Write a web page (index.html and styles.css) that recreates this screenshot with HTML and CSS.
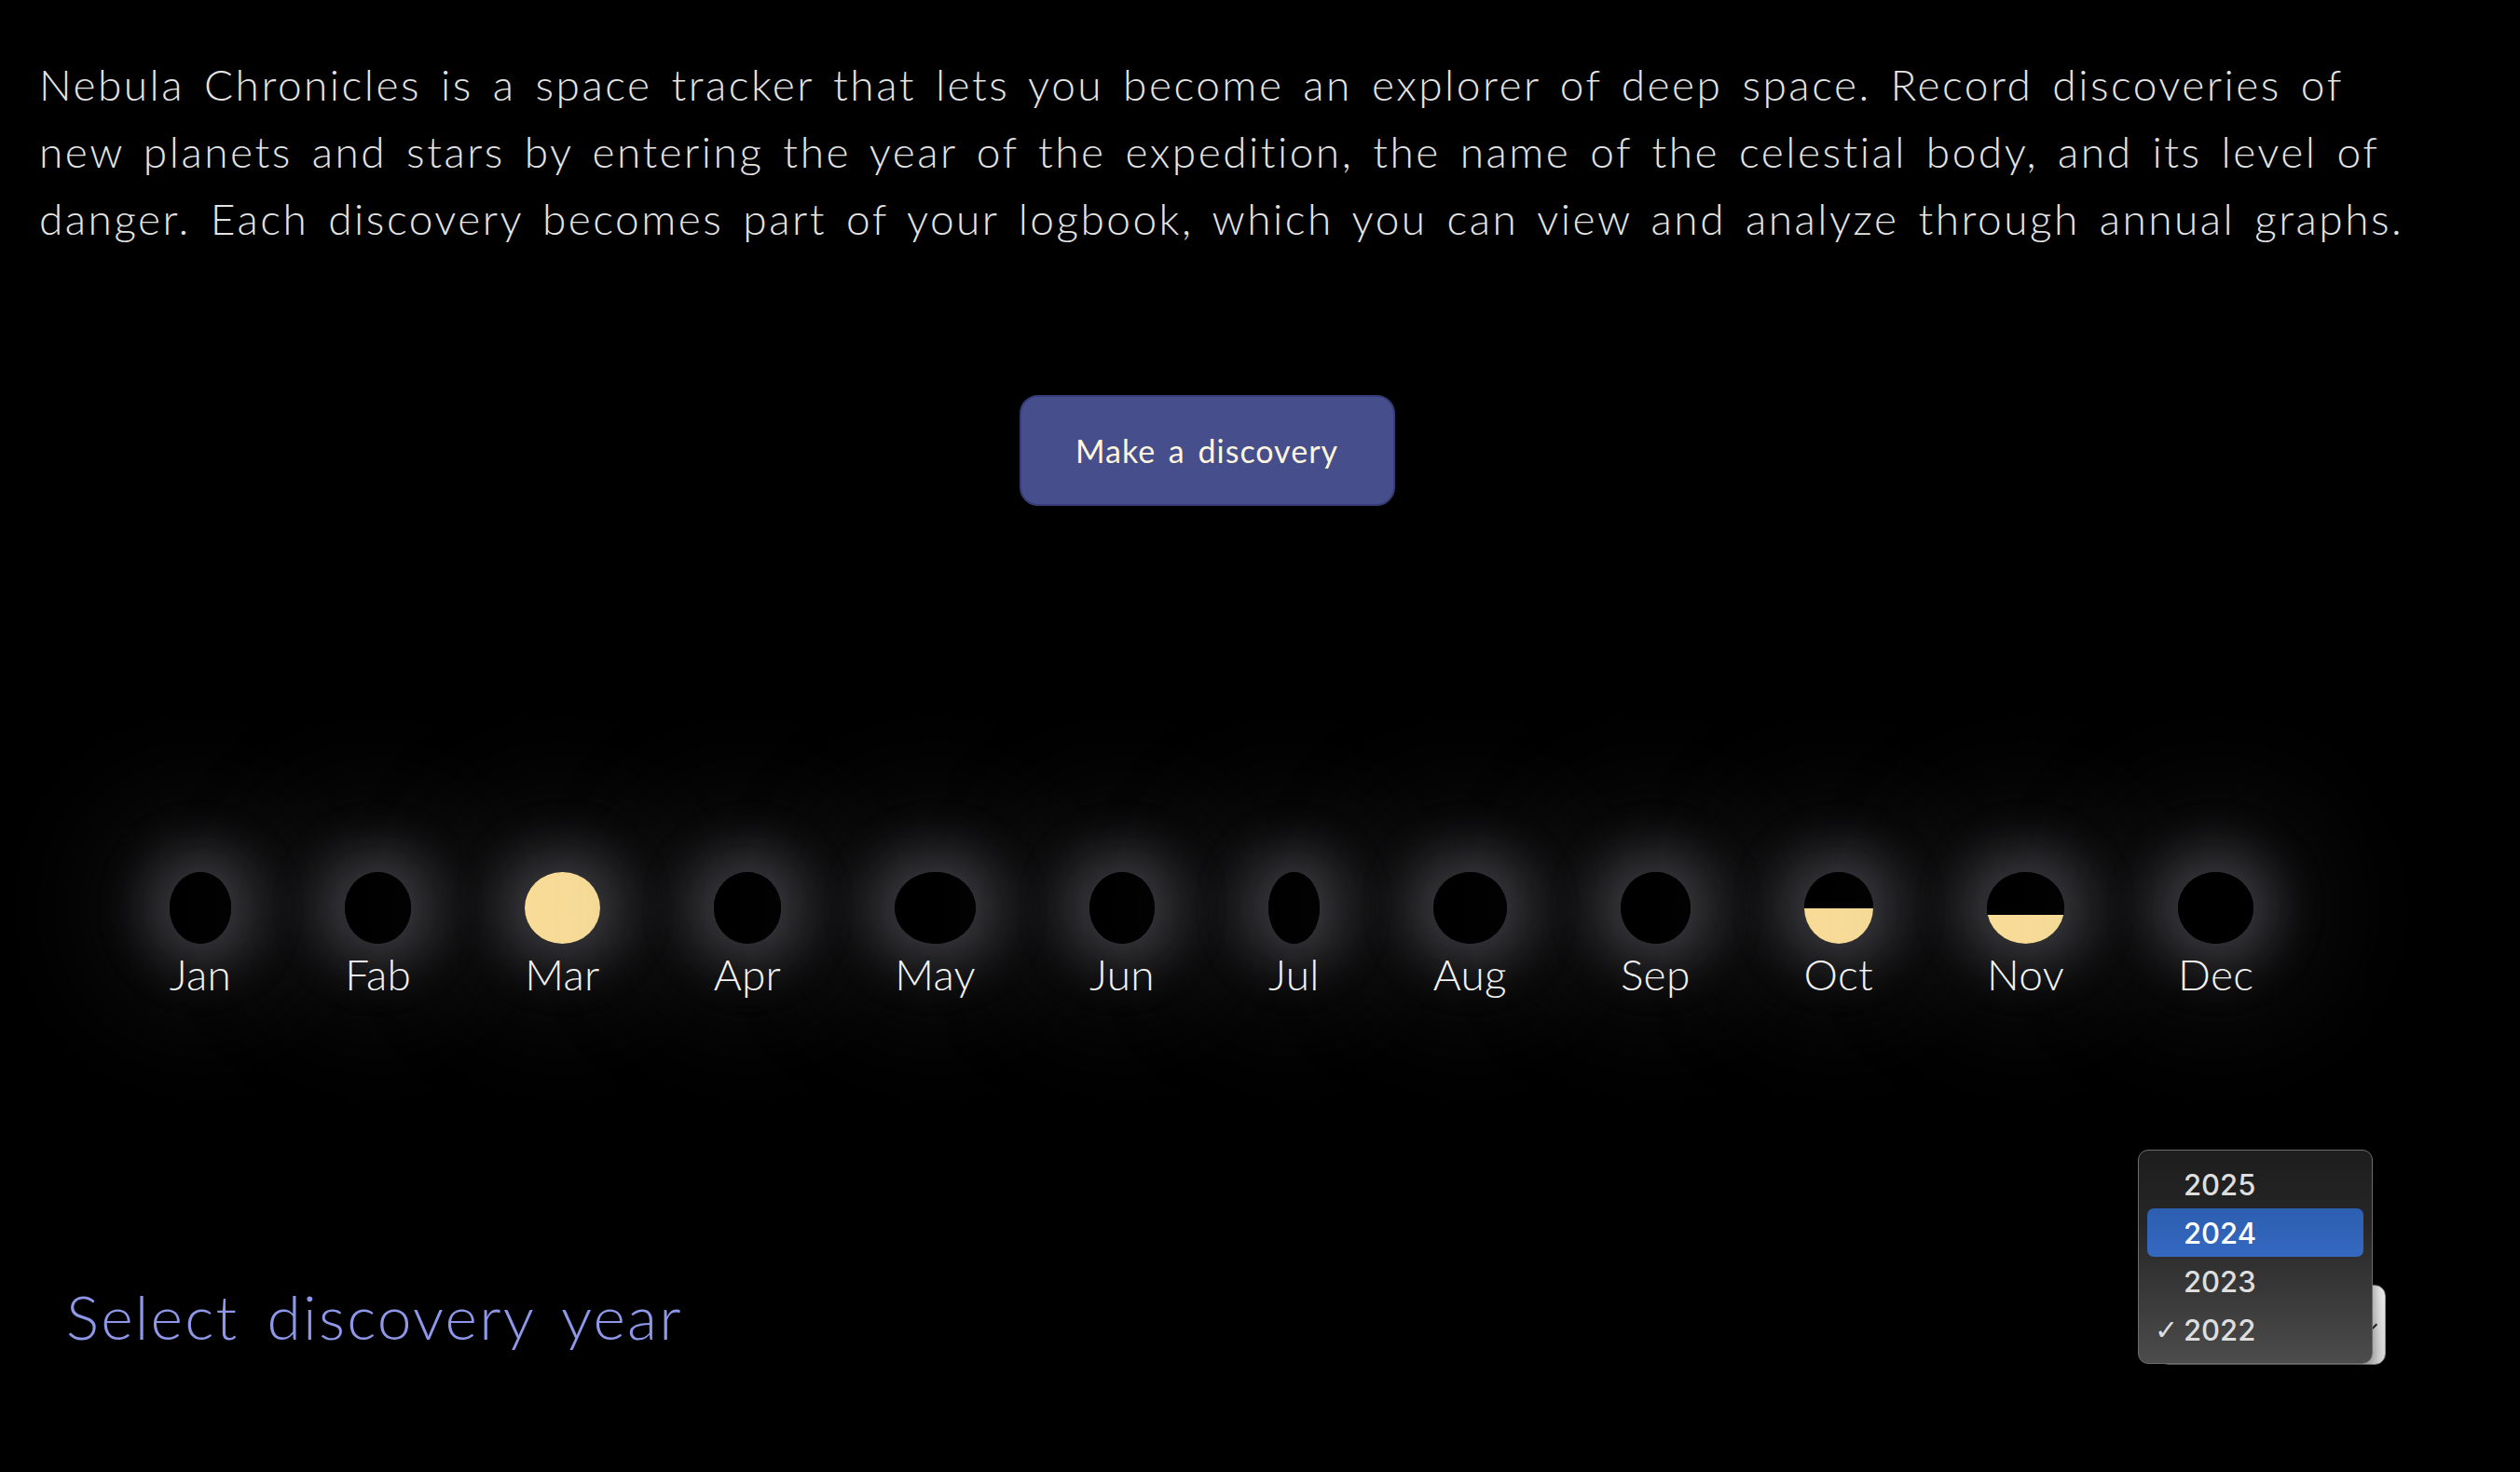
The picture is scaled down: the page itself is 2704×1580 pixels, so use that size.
FILE: index.html
```html
<!DOCTYPE html>
<html lang="en">
<head>
<meta charset="utf-8">
<title>Nebula Chronicles</title>
<link rel="stylesheet" href="styles.css">
</head>
<body>
<main class="page">
  <p class="intro">Nebula Chronicles is a space tracker that lets you become an explorer of deep space. Record discoveries of new planets and stars by entering the year of the expedition, the name of the celestial body, and its level of danger. Each discovery becomes part of your logbook, which you can view and analyze through annual graphs.</p>

  <div class="cta">
    <button class="btn" type="button">Make a discovery</button>
  </div>

  <section class="months">
    <div class="month"><div class="moon" style="--fill:0%"></div><span class="m-label">Jan</span></div>
    <div class="month"><div class="moon" style="--fill:0%"></div><span class="m-label">Fab</span></div>
    <div class="month"><div class="moon" style="--fill:100%"></div><span class="m-label">Mar</span></div>
    <div class="month"><div class="moon" style="--fill:0%"></div><span class="m-label">Apr</span></div>
    <div class="month"><div class="moon" style="--fill:0%"></div><span class="m-label">May</span></div>
    <div class="month"><div class="moon" style="--fill:0%"></div><span class="m-label">Jun</span></div>
    <div class="month"><div class="moon" style="--fill:0%"></div><span class="m-label">Jul</span></div>
    <div class="month"><div class="moon" style="--fill:0%"></div><span class="m-label">Aug</span></div>
    <div class="month"><div class="moon" style="--fill:0%"></div><span class="m-label">Sep</span></div>
    <div class="month"><div class="moon" style="--fill:50%"></div><span class="m-label">Oct</span></div>
    <div class="month"><div class="moon" style="--fill:40%"></div><span class="m-label">Nov</span></div>
    <div class="month"><div class="moon" style="--fill:0%"></div><span class="m-label">Dec</span></div>
  </section>

  <footer class="year-row">
    <h2 class="year-label">Select discovery year</h2>
    <div class="select-wrap">
      <div class="select-box"><span class="chev"></span></div>
      <ul class="menu">
        <li class="opt"><span class="check"></span>2025</li>
        <li class="opt active"><span class="check"></span>2024</li>
        <li class="opt"><span class="check"></span>2023</li>
        <li class="opt"><span class="check">&#10003;</span>2022</li>
      </ul>
    </div>
  </footer>
</main>
</body>
</html>
```

FILE: styles.css
```css
html, body {
  margin: 0;
  padding: 0;
  background: #000;
}

body {
  width: 2704px;
  height: 1580px;
  overflow: hidden;
  font-family: Lato, "Noto Sans", "Liberation Sans", sans-serif;
}

.page {
  width: 2600px;
  display: flex;
  flex-direction: column;
}

.intro {
  margin: 0;
  padding: 55px 0 0 42px;
  width: 2600px;
  box-sizing: border-box;
  font-family: Lato, "Liberation Sans", sans-serif;
  font-size: 46px;
  line-height: 72px;
  font-weight: 300;
  color: #e4e4e4;
  letter-spacing: 2.5px;
  word-spacing: 6px;
}

.cta {
  display: flex;
  justify-content: center;
  margin-top: 153px;
}

.btn {
  width: 403px;
  height: 119px;
  margin-left: -10px;
  background: #464e8c;
  border: 2px solid #353c78;
  border-radius: 20px;
  color: #fdf6dc;
  font-family: Lato, "Noto Sans", sans-serif;
  font-size: 34px;
  font-weight: 400;
  letter-spacing: 1px;
  word-spacing: 4px;
}

.months {
  display: flex;
  justify-content: center;
  gap: 122px;
  margin-top: 393px;
}

.month {
  display: flex;
  flex-direction: column;
  align-items: stretch;
}

.moon {
  height: 77px;
  border-radius: 50%;
  background: linear-gradient(to top, #f8dc98 var(--fill), #000 var(--fill));
  box-shadow: 0 0 55px 24px rgba(160, 160, 172, 0.32), 0 0 140px 70px rgba(110, 110, 120, 0.17);
}

.m-label {
  margin-top: 3px;
  font-size: 46px;
  line-height: 60px;
  font-weight: 300;
  color: #f4f4f4;
  text-align: center;
  letter-spacing: 0.3px;
}

.year-row {
  display: flex;
  align-items: flex-start;
  justify-content: space-between;
  margin-top: 294px;
  padding: 0 40px 0 71px;
}

.year-label {
  margin: 0;
  font-size: 66px;
  font-weight: 300;
  line-height: 86px;
  color: #8e97e8;
  letter-spacing: 2.2px;
  word-spacing: 10px;
}

.select-wrap {
  position: relative;
  width: 245px;
  height: 86px;
  margin-top: 9px;
}

.select-box {
  width: 100%;
  height: 100%;
  box-sizing: border-box;
  border-radius: 12px;
  background: linear-gradient(#f2f2f2, #dcdcdc);
  border: 1px solid #8a8a8a;
  box-shadow: 0 2px 2px rgba(0,0,0,0.5);
  display: flex;
  align-items: center;
  justify-content: flex-end;
  padding-right: 10px;
}

.chev {
  width: 8px;
  height: 8px;
  border-right: 2px solid #222;
  border-bottom: 2px solid #222;
  transform: rotate(45deg);
}

.menu {
  position: absolute;
  left: -21px;
  top: -145px;
  width: 252px;
  box-sizing: border-box;
  margin: 0;
  padding: 10px 9px;
  list-style: none;
  border: 1px solid #6c6c6c;
  border-radius: 11px;
  background: linear-gradient(180deg, #1d1d1d 0%, #262626 35%, #4c4c4c 100%);
  box-shadow: 0 6px 16px rgba(0,0,0,0.5);
}

.opt {
  display: flex;
  align-items: center;
  height: 52px;
  border-radius: 7px;
  font-family: Inter, "Liberation Sans", sans-serif;
  font-size: 31px;
  font-weight: 500;
  color: #dedede;
}

.opt.active {
  background: linear-gradient(180deg, #2c5eb0, #3568c0);
  color: #fff;
}

.check {
  width: 39px;
  padding-left: 8px;
  box-sizing: border-box;
  font-family: "DejaVu Sans", sans-serif;
  font-size: 30px;
  color: #dedede;
}
```
